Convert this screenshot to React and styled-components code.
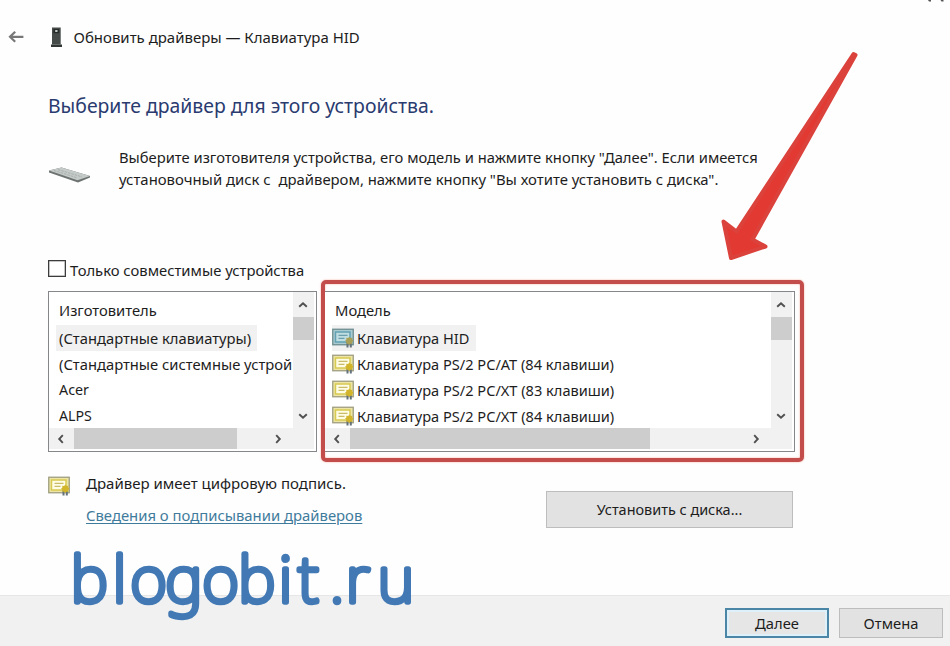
import React from "react";
import styled, { createGlobalStyle } from "styled-components";

const GlobalStyle = createGlobalStyle`
  * { box-sizing: border-box; }
  body { margin: 0; background: #fff; overflow: hidden; }
`;

const Page = styled.main`
  position: relative;
  display: flex;
  flex-direction: column;
  width: 950px;
  height: 646px;
  background: #fefefe;
  color: #1d1d1d;
  font-family: "Noto Sans", "Open Sans", sans-serif;
  font-size: 14.75px;
  overflow: hidden;
`;

const Label = styled.span`
  white-space: pre;
  font-size: ${(p) => p.$size || 14.75}px;
  line-height: 22px;
`;

const TitleBar = styled.header`
  display: flex;
  align-items: center;
  height: 74px;
  padding-left: 8px;
`;

const BackIcon = styled.svg`
  width: 16px;
  height: 14px;
  margin-right: 26px;
`;

const TowerIcon = styled.svg`
  width: 13px;
  height: 20px;
  margin-right: 10.5px;
`;

const Heading = styled.h1`
  height: 63px;
  margin: 0;
  padding-left: 48px;
  color: #2a3b70;
  font-size: 19.4px;
  font-weight: 400;
  line-height: 63px;
  white-space: nowrap;
`;

const Intro = styled.section`
  display: flex;
  height: 120px;
  padding: 9px 0 0 48px;
`;

const KeyboardIcon = styled.svg`
  width: 44px;
  height: 18px;
  margin: 20px 27px 0 0;
`;

const IntroText = styled.div`
  display: flex;
  flex-direction: column;
`;

const CompatibleRow = styled.label`
  display: flex;
  align-items: center;
  height: 25px;
  margin-bottom: 2px;
  padding-left: 48px;
`;

const CheckBox = styled.span`
  width: 17.5px;
  height: 17px;
  margin: -2px 4.5px 0 0;
  border: 1px solid #3c3c3c;
  box-shadow: inset 0 0 0 0.5px #8a8a8a;
  background: #fff;
`;

const Lists = styled.section`
  display: flex;
  height: 178px;
  padding-left: 48px;
`;

const Highlight = styled.div`
  width: 483px;
  height: 182px;
  margin: -4px 0 0 4px;
  padding: 7px 5px 6px 0;
  border: 4px solid #c24d4a;
  border-radius: 5px;
  box-shadow: 0 0 2px #f6a899, inset 0 0 2px #f6a899;
`;

const Panel = styled.div`
  display: grid;
  grid-template-columns: 1fr 21px;
  grid-template-rows: 136px 21px;
  width: ${(p) => p.$width}px;
  height: 161px;
  margin-top: ${(p) => p.$top || 0}px;
  padding: 0 2px 2px 0;
  border: 1.5px solid #85878b;
  border-left-width: ${(p) => (p.$flush ? 0 : 1)}px;
  background: #fff;
`;

const Items = styled.div`
  display: flex;
  flex-direction: column;
  min-width: 0;
  padding-left: 7px;
  overflow: hidden;
`;

const ListHeader = styled.div`
  flex: none;
  height: 33.3px;
  padding: ${(p) => (p.$indent ? "7px 0 0 3px" : "7px 0 0 3px")};
`;

const Item = styled.div`
  display: flex;
  align-items: center;
  align-self: flex-start;
  flex: none;
  height: 25.8px;
  padding: 0 6px 0 3px;
  background: ${(p) => (p.$selected ? "#f1f1f1" : "transparent")};
`;

const ModelItem = styled(Item)`
  padding: 0 7px 0 0;
`;

const CertIcon = styled.svg`
  flex: none;
  width: 23px;
  height: 20px;
  margin-right: 2px;
`;

const VTrack = styled.div`
  display: flex;
  flex-direction: column;
  align-items: center;
  background: #f1f1f1;
`;

const VThumb = styled.div`
  width: 21px;
  height: 23px;
  margin-bottom: auto;
  background: #cdcdcd;
`;

const HTrack = styled.div`
  display: flex;
  align-items: center;
  grid-column: 1 / 3;
  padding-right: 23px;
  background: #f1f1f1;
`;

const HThumb = styled.div`
  width: ${(p) => p.$width}px;
  height: 21px;
  margin-right: auto;
  background: #cdcdcd;
`;

const StepButton = styled.span`
  display: grid;
  place-items: center;
  flex: none;
  width: 25px;
  height: 25px;
  svg { display: block; transform: translateX(-1px) rotate(${(p) => p.$turn}deg); }
`;

const Signing = styled.section`
  display: flex;
  height: 132.5px;
  padding: 10px 0 0 48px;
`;

const SignIcon = styled(CertIcon)`
  margin: 4px 15px 0 0;
`;

const SignText = styled.div`
  display: flex;
  flex-direction: column;
  gap: 10px;
  width: 460px;
`;

const Link = styled.a`
  color: #3f7b9c;
  font-size: 14.85px;
  line-height: 22px;
  text-decoration: underline;
  text-decoration-thickness: 1px;
  text-underline-offset: 2px;
`;

const Button = styled.button`
  width: ${(p) => p.$width}px;
  height: ${(p) => p.$height}px;
  padding: 0;
  border: ${(p) => (p.$primary ? "2px solid #4c86a6" : "1px solid #bdbdbd")};
  background: ${(p) => (p.$primary ? "#e6e6e6" : "#e2e2e2")};
  box-shadow: ${(p) => (p.$primary ? "inset 0 0 0 2px #def0fa" : "none")};
  color: #1d1d1d;
  font: inherit;
`;

const DiskButton = styled(Button)`
  margin-top: 19px;
`;

const Footer = styled.footer`
  display: flex;
  flex: 1;
  justify-content: flex-end;
  gap: 10px;
  padding: 12px 7px 0 0;
  border-top: 1px solid #e6e6e6;
  background: #f1f1f1;
`;

const Annotations = styled.svg`
  position: absolute;
  inset: 0;
  width: 950px;
  height: 646px;
  pointer-events: none;
`;

function Step({ turn }) {
  return (
    <StepButton $turn={turn}>
      <svg width="10" height="8" viewBox="0 0 10 8" fill="none">
        <path d="M1.2 5.8 5 2.2l3.8 3.6" stroke="#505050" strokeWidth="1.9" />
      </svg>
    </StepButton>
  );
}

function Certificate({ as: Icon = CertIcon, selected }) {
  const paper = selected ? "#a9cad0" : "#ece5a6";
  const line = selected ? "#62a1b3" : "#d8c950";
  return (
    <Icon viewBox="0 0 23 20">
      <rect x="0.75" y="1.25" width="20.5" height="15.5" fill={paper} stroke={selected ? "#6d8c8e" : "#9f9e80"} strokeWidth="1.3" />
      <rect x="3.5" y="4" width="14.5" height="10" fill={selected ? "#c0dde1" : "#fffde6"} stroke={line} strokeWidth="1.5" />
      <path d="M6.5 7.3h9M6.5 10.3h6" stroke={selected ? "#6a9fae" : "#cabd6a"} strokeWidth="1.2" />
      <path d="M15.5 14v5.500M18.800 14v5.500" fill="none" stroke="#64727a" strokeWidth="2" />
      <path d="M17.300 8.800l1.200 1.200 1.800-.2-.1 1.800 1.300 1.200-1.300 1.200.1 1.800-1.800-.1-1.200 1.200-1.200-1.200-1.800.1.1-1.800-1.300-1.200 1.300-1.200-.1-1.800 1.800.2z" fill={selected ? "#a8a056" : "#d3b52c"} />
    </Icon>
  );
}

function VScroll() {
  return (
    <VTrack>
      <Step turn={0} />
      <VThumb />
      <Step turn={180} />
    </VTrack>
  );
}

function HScroll({ width }) {
  return (
    <HTrack>
      <Step turn={-90} />
      <HThumb $width={width} />
      <Step turn={90} />
    </HTrack>
  );
}

const makers = [
  { name: "(Стандартные клавиатуры)", selected: true },
  { name: "(Стандартные системные устрой" },
  { name: "Acer", size: 14.3 },
  { name: "ALPS", size: 14.2 },
];

const models = [
  { name: "Клавиатура HID", selected: true },
  { name: "Клавиатура PS/2 PC/AT (84 клавиши)" },
  { name: "Клавиатура PS/2 PC/XT (83 клавиши)" },
  { name: "Клавиатура PS/2 PC/XT (84 клавиши)" },
];

export default function App() {
  return (
    <Page>
      <GlobalStyle />
      <TitleBar>
        <BackIcon viewBox="0 0 16 14" fill="none">
          <path d="M7.2 1.8 2 6.8l5.2 5M2.4 6.8h13" stroke="#777" strokeWidth="2.2" />
        </BackIcon>
        <TowerIcon viewBox="0 0 13 20">
          <path d="M2 .5h8.7v17H2z" fill="#454b49" />
          <path d="M1 17.5h11V20H1z" fill="#303634" />
          <path d="M3.5 2h5.7v4.2H3.5z" fill="#262b2a" />
          <path d="M5.2 3h2.3v2H5.2z" fill="#bfc8c4" />
        </TowerIcon>
        <Label $size={14.97}>Обновить драйверы — Клавиатура HID</Label>
      </TitleBar>
      <Heading>Выберите драйвер для этого устройства.</Heading>
      <Intro>
        <KeyboardIcon viewBox="0 0 44 18">
          <path d="M1 4.500 13.500 1.500 42 10v1.500L30 16.500 1 6.500z" fill="#6d7370" />
          <path d="M1 4.500 13.500 1.500 42 10 29.500 14.300z" fill="#c4cac7" />
          <path d="m6 4.500 23 7.300M10 3.600l24 7.300" stroke="#a8afac" strokeDasharray="2.5 1" fill="none" />
        </KeyboardIcon>
        <IntroText>
          <Label $size={14.76}>Выберите изготовителя устройства, его модель и нажмите кнопку "Далее". Если имеется</Label>
          <Label $size={14.89}>установочный диск с  драйвером, нажмите кнопку "Вы хотите установить с диска".</Label>
        </IntroText>
      </Intro>
      <CompatibleRow>
        <CheckBox />
        <Label $size={14.8}>Только совместимые устройства</Label>
      </CompatibleRow>
      <Lists>
        <Panel $width={269} $top={7}>
          <Items>
            <ListHeader>
              <Label>Изготовитель</Label>
            </ListHeader>
            {makers.map((m) => (
              <Item key={m.name} $selected={m.selected}>
                <Label $size={m.size}>{m.name}</Label>
              </Item>
            ))}
          </Items>
          <VScroll />
          <HScroll width={163} />
        </Panel>
        <Highlight>
          <Panel $width={470} $flush>
            <Items>
              <ListHeader $indent>
                <Label>Модель</Label>
              </ListHeader>
              {models.map((m) => (
                <ModelItem key={m.name} $selected={m.selected}>
                  <Certificate selected={m.selected} />
                  <Label $size={14.58}>{m.name}</Label>
                </ModelItem>
              ))}
            </Items>
            <VScroll />
            <HScroll width={300} />
          </Panel>
        </Highlight>
      </Lists>
      <Signing>
        <Certificate as={SignIcon} />
        <SignText>
          <Label $size={15}>Драйвер имеет цифровую подпись.</Label>
          <Link>Сведения о подписывании драйверов</Link>
        </SignText>
        <DiskButton $width={247} $height={37}>
          <Label $size={14.45}>Установить с диска...</Label>
        </DiskButton>
      </Signing>
      <Footer>
        <Button $width={104} $height={30} $primary>Далее</Button>
        <Button $width={104} $height={30}>Отмена</Button>
      </Footer>
      <Annotations viewBox="0 0 950 646">
        <path d="M928 0h3v1.5h-2zM940.500 0h3v1.500h-2z" fill="#555" />
        <path
          d="M853.500 54 736.500 231.500 723.500 221.500 731 258 765.500 246.500 752.500 239.500 855.500 55z"
          fill="#e23a32"
          stroke="#dc423c"
          strokeWidth="4"
          strokeLinejoin="round"
        />
        <text
          x="71 113 130.500 165.500 202.500 238.500 279 298.500 330 346 378"
          y="602"
          fontFamily="Noto Sans, sans-serif"
          fontWeight="100"
          fontSize="63"
          fill="#4279b4"
          stroke="#4279b4"
          strokeWidth="5.400"
          strokeLinejoin="round"
        >
          blogobit.ru
        </text>
      </Annotations>
    </Page>
  );
}
